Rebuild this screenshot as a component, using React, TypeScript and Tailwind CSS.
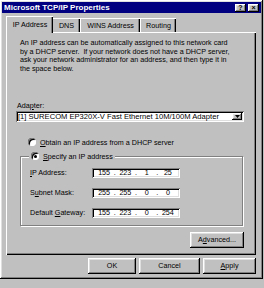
import React from "react";

const raised =
  "shadow-[inset_-1px_-1px_#000000,inset_1px_1px_#ffffff,inset_-2px_-2px_#808080,inset_2px_2px_#dfdfdf]";
const sunken =
  "shadow-[inset_1px_1px_#808080,inset_-1px_-1px_#ffffff,inset_2px_2px_#000000,inset_-2px_-2px_#dfdfdf]";

function Radio({ checked }: { checked?: boolean }) {
  return (
    <span className="relative inline-flex w-[8px] h-[8px] rounded-full bg-white shadow-[inset_1px_1px_#808080,inset_-1px_-1px_#ffffff,inset_2px_2px_#000000] items-center justify-center shrink-0">
      {checked && <span className="w-[3px] h-[3px] rounded-full bg-black" />}
    </span>
  );
}

function IpField({ parts }: { parts: string[] }) {
  return (
    <div className={`w-[88px] h-[10px] bg-white ${sunken} flex items-center px-[3px] leading-none`}>
      {parts.map((p, i) => (
        <React.Fragment key={i}>
          {i > 0 && <span className="w-[3px] text-center">.</span>}
          <span className="flex-1 text-center">{p}</span>
        </React.Fragment>
      ))}
    </div>
  );
}

function Btn({ w, children }: { w: string; children: React.ReactNode }) {
  return (
    <div className={`${w} h-[16px] bg-[#c0c0c0] ${raised} flex items-center justify-center leading-none`}>
      {children}
    </div>
  );
}

export default function App() {
  return (
    <div className="w-[264px] h-[288px] bg-[#c0c0c0] font-['Liberation_Sans',Arial,sans-serif] text-[7.2px] text-black">
      <div className={`w-[263px] h-[279px] p-[2px] bg-[#c0c0c0] ${raised} flex flex-col`}>
        {/* title bar */}
        <div className="h-[11px] bg-[#000080] flex items-center justify-between pl-[2px] pr-[2px]">
          <span className="text-white font-bold text-[8px] leading-none whitespace-nowrap">
            Microsoft TCP/IP Properties
          </span>
          <div className="flex gap-[2px]">
            <div className={`w-[11px] h-[8px] bg-[#c0c0c0] ${raised} flex items-center justify-center text-[7px] font-bold leading-none`}>
              ?
            </div>
            <div className={`w-[11px] h-[8px] bg-[#c0c0c0] ${raised} flex items-center justify-center text-[7px] font-bold leading-none`}>
              ×
            </div>
          </div>
        </div>

        {/* tabs */}
        <div className="mt-[3px] h-[16px] flex items-end pl-[4px]">
          <div className="relative z-10 w-[47px] h-[17px] -mb-[1px] bg-[#c0c0c0] border-t border-l border-white shadow-[inset_-1px_0_#000000,inset_-2px_0_#808080] flex items-start justify-center pt-[4px] leading-none">
            IP Address
          </div>
          <div className="w-[27px] h-[14px] bg-[#c0c0c0] border-t border-white shadow-[inset_-1px_0_#000000,inset_-2px_0_#808080] flex items-center justify-center leading-none">
            DNS
          </div>
          <div className="w-[60px] h-[14px] bg-[#c0c0c0] border-t border-l border-white shadow-[inset_-1px_0_#000000,inset_-2px_0_#808080] flex items-center justify-center leading-none">
            WINS Address
          </div>
          <div className="w-[36px] h-[14px] bg-[#c0c0c0] border-t border-l border-white shadow-[inset_-1px_0_#000000,inset_-2px_0_#808080] flex items-center justify-center leading-none">
            Routing
          </div>
        </div>

        {/* panel */}
        <div className="ml-[4px] w-[250px] h-[223px] bg-[#c0c0c0] shadow-[inset_1px_1px_#ffffff,inset_-1px_-1px_#000000,inset_-2px_-2px_#808080] flex flex-col">
          <div className="mt-[7px] ml-[14px] leading-[8.7px] whitespace-nowrap">
            <div>An IP address can be automatically assigned to this network card</div>
            <div>by a DHCP server.&nbsp; If your network does not have a DHCP server,</div>
            <div>ask your network administrator for an address, and then type it in</div>
            <div>the space below.</div>
          </div>

          <div className="mt-[27px] ml-[11px] h-[9px] leading-[9px]">
            Ada<span className="underline">p</span>ter:
          </div>
          <div className={`mt-[1px] ml-[10px] w-[228px] h-[11px] bg-white ${sunken} flex items-center pl-[2px] pr-[2px] leading-none`}>
            <span className="flex-1 whitespace-nowrap text-[7.6px]">[1] SURECOM EP320X-V Fast Ethernet 10M/100M Adapter</span>
            <div className={`w-[10px] h-[7px] bg-[#c0c0c0] ${raised} flex items-center justify-center`}>
              <svg width="5" height="3" viewBox="0 0 5 3">
                <path d="M0 0H5L2.5 3Z" fill="#000" />
              </svg>
            </div>
          </div>

          <div className="mt-[16px] ml-[22px] h-[9px] flex items-center gap-[4px] leading-none">
            <Radio />
            <span>
              <span className="underline">O</span>btain an IP address from a DHCP server
            </span>
          </div>

          <div className="relative mt-[9px] ml-[14px] w-[223px] h-[70px] border border-[#808080] shadow-[1px_1px_0_#ffffff,inset_1px_1px_0_#ffffff]">
            <div className="absolute -top-[5px] left-[8px] px-[2px] bg-[#c0c0c0] flex items-center gap-[4px] h-[9px] leading-none">
              <Radio checked />
              <span>
                <span className="underline">S</span>pecify an IP address
              </span>
            </div>
            <div className="mt-[11px] pl-[9px] flex flex-col gap-[10px]">
              <div className="flex items-center h-[10px]">
                <span className="w-[62px] leading-none">
                  <span className="underline">I</span>P Address:
                </span>
                <IpField parts={["155", "223", "1", "25"]} />
              </div>
              <div className="flex items-center h-[10px]">
                <span className="w-[62px] leading-none">
                  S<span className="underline">u</span>bnet Mask:
                </span>
                <IpField parts={["255", "255", "0", "0"]} />
              </div>
              <div className="flex items-center h-[10px]">
                <span className="w-[62px] leading-none">
                  Default <span className="underline">G</span>ateway:
                </span>
                <IpField parts={["155", "223", "0", "254"]} />
              </div>
            </div>
          </div>

          <div className="mt-[6px] ml-[184px]">
            <Btn w="w-[54px]">
              <span>
                A<span className="underline">d</span>vanced...
              </span>
            </Btn>
          </div>
        </div>

        {/* bottom buttons */}
        <div className="mt-[3px] flex justify-end gap-[3px] pr-[5px]">
          <Btn w="w-[48px]">OK</Btn>
          <Btn w="w-[61px]">Cancel</Btn>
          <Btn w="w-[53px]">
            <span>
              <span className="underline">A</span>pply
            </span>
          </Btn>
        </div>
      </div>
    </div>
  );
}
